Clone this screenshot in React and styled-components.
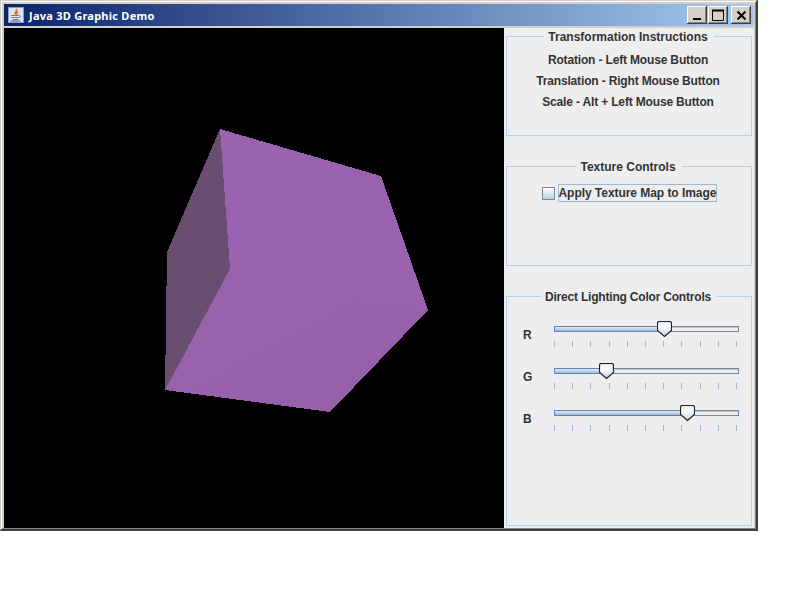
import React from 'react'
import styled, { createGlobalStyle } from 'styled-components'

const GlobalStyle = createGlobalStyle`
  html, body {
    margin: 0;
    padding: 0;
    background: #fff;
  }
`

const Frame = styled.div`
  width: 758px;
  height: 531px;
  box-sizing: border-box;
  background: #d4d0c8;
  border-style: solid;
  border-width: 1px 2px 2px 1px;
  border-color: #d4d0c8 #404040 #404040 #d4d0c8;
  padding: 2px 2px 1px 3px;
  box-shadow: inset 1px 1px 0 #fff, inset -1px -1px 0 #808080;
  display: flex;
  flex-direction: column;
`

const TitleBar = styled.div`
  height: 22px;
  margin: 1px 0 2px;
  padding: 0 3px 0 4px;
  display: flex;
  align-items: center;
  background: linear-gradient(90deg, #0a246a 0%, #a6caf0 100%);
`

const TitleText = styled.span`
  flex: 1;
  margin-left: 5px;
  color: #fff;
  font: bold 11px 'Noto Sans', sans-serif;
  letter-spacing: 0.25px;
`

const WinButton = styled.button`
  width: 20px;
  height: 18px;
  margin-left: ${(p) => p.$gap}px;
  padding: 0;
  background: #d4d0c8;
  border: 0;
  box-shadow: inset -1px -1px 0 #404040, inset 1px 1px 0 #fff, inset -2px -2px 0 #808080;
  display: flex;
  align-items: center;
  justify-content: center;
`

const Body = styled.div`
  flex: 1;
  display: flex;
  min-height: 0;
`

const Canvas = styled.svg`
  width: 500px;
  height: 500px;
  display: block;
  background: #000;
  flex: none;
`

const Side = styled.div`
  flex: 1;
  background: #eeeeee;
  padding: 2px;
  box-sizing: border-box;
  display: flex;
  flex-direction: column;
  gap: 24px;
  font: bold 12px 'Liberation Sans', Arial, sans-serif;
  color: #333333;
`

const Group = styled.fieldset`
  margin: 0;
  padding: 0;
  height: ${(p) => p.$h}px;
  box-sizing: border-box;
  border: 1px solid #b8cfe5;
  min-width: 0;
`

const GroupTitle = styled.legend`
  margin: 0 auto;
  padding: 0 6px 0 4px;
  line-height: 15px;
  height: 13px;
  letter-spacing: ${(p) => (p.$tight ? '-0.2px' : '0')};
`

const Lines = styled.div`
  display: flex;
  flex-direction: column;
  align-items: center;
  gap: 7px;
  padding: 10px 2px 0 0;
  letter-spacing: -0.16px;
`

const Line = styled.div`
  line-height: 14px;
`

const CheckRow = styled.label`
  display: flex;
  justify-content: center;
  gap: 3px;
  align-items: center;
  padding-top: 11px;
`

const CheckBox = styled.span`
  width: 11px;
  height: 11px;
  border: 1px solid #7a8a99;
  background: linear-gradient(#ffffff, #b8cfe5);
`

const CheckLabel = styled.span`
  border: 1px solid #a3b8cc;
  line-height: 16px;
  width: 157px;
  white-space: nowrap;
  letter-spacing: -0.05px;
`

const Sliders = styled.div`
  display: flex;
  flex-direction: column;
  gap: 12px;
  padding: 17px 0 0 16px;
`

const SliderRow = styled.div`
  height: 30px;
  display: flex;
`

const SliderLabel = styled.span`
  width: 31px;
  line-height: 14px;
  padding-top: 8px;
`

const TrackArea = styled.div`
  position: relative;
  width: 185px;
  height: 30px;
`

const Track = styled.div`
  position: absolute;
  top: 6px;
  left: 0;
  right: 0;
  height: 6px;
  box-sizing: border-box;
  border: 1px solid #7a8a99;
  background: linear-gradient(#b8c4d0 0 1px, #eeeeee 1px);
`

const TrackFill = styled.div`
  position: absolute;
  top: 6px;
  left: 0;
  height: 6px;
  box-sizing: border-box;
  border: 1px solid #6382bf;
  border-right: 0;
  background: linear-gradient(#e3ecf5, #a3b8cc);
`

const Thumb = styled.svg`
  position: absolute;
  top: 1px;
  width: 15px;
  height: 16px;
  display: block;
`

const Ticks = styled.div`
  position: absolute;
  top: 21px;
  left: 0;
  width: 183px;
  height: 6px;
  display: flex;
  justify-content: space-between;
`

const Tick = styled.i`
  width: 1px;
  height: 6px;
  background: #a3b8cc;
`

function JavaIcon() {
  return (
    <svg width='16' height='16' viewBox='0 0 16 16' style={{ flex: 'none' }}>
      <rect x='0.5' y='0.5' width='15' height='15' fill='#dfe3ea' stroke='#8f9bb3' />
      <path d='M8 2c2 2-2 3-1 5 .4-1 2-2 3-3-1 1.600-2 2-1 4' fill='none' stroke='#e8641c' strokeWidth='1.200' />
      <path d='M3 8.500h7M3.500 10.500h6.500M5 12.500h5' stroke='#5b7faa' strokeWidth='1.200' />
      <path d='M10.500 8.500c2.500-.5 2.500 2-.5 2.500' fill='none' stroke='#5b7faa' />
      <path d='M2.500 14h10' stroke='#3d5f8c' />
    </svg>
  )
}

function SliderThumb({ center }) {
  return (
    <Thumb viewBox='0 0 15 16' style={{ left: center - 7.5 }}>
      <defs>
        <linearGradient id={'thumb' + center} x1='0' y1='0' x2='0' y2='1'>
          <stop offset='0' stopColor='#dde8f3' />
          <stop offset='0.35' stopColor='#ffffff' />
          <stop offset='1' stopColor='#b8cfe5' />
        </linearGradient>
      </defs>
      <path
        d='M1.500.5h12l1 1v8l-7 6-7-6v-8z'
        fill={`url(#thumb${center})`}
        stroke='#222222'
        strokeWidth='1.200'
      />
    </Thumb>
  )
}

function Slider({ label, center }) {
  return (
    <SliderRow>
      <SliderLabel>{label}</SliderLabel>
      <TrackArea>
        <Track />
        <TrackFill style={{ width: center }} />
        <Ticks>
          {Array.from({ length: 11 }).map((_, i) => (
            <Tick key={i} />
          ))}
        </Ticks>
        <SliderThumb center={center} />
      </TrackArea>
    </SliderRow>
  )
}

export default function App() {
  return (
    <>
      <GlobalStyle />
      <Frame>
        <TitleBar>
          <JavaIcon />
          <TitleText>Java 3D Graphic Demo</TitleText>
          <WinButton $gap={0}>
            <svg width='12' height='12' viewBox='0 0 12 12'>
              <rect x='2' y='9' width='8' height='2' fill='#000' />
            </svg>
          </WinButton>
          <WinButton $gap={1}>
            <svg width='14' height='13' viewBox='0 0 14 13'>
              <path d='M1.500 1.500h11v10h-11z' fill='none' stroke='#000' />
              <path d='M1 1.500h12' stroke='#000' strokeWidth='2' />
            </svg>
          </WinButton>
          <WinButton $gap={3}>
            <svg width='11' height='11' viewBox='0 0 11 11'>
              <path d='M1.500 1.500l8 8M9.500 1.500l-8 8' stroke='#000' strokeWidth='2' />
            </svg>
          </WinButton>
        </TitleBar>
        <Body>
          <Canvas viewBox='4 28 500 500' shapeRendering='crispEdges'>
            <defs>
              <linearGradient id='lower' x1='0' y1='0' x2='1' y2='1'>
                <stop offset='0' stopColor='#9a62ae' />
                <stop offset='1' stopColor='#9460a8' />
              </linearGradient>
            </defs>
            <polygon points='220,129 381,176 428,310 230,269' fill='#9a62ae' />
            <polygon points='230,269 428,310 330,412 165,390' fill='url(#lower)' />
            <polygon points='220,129 230,269 165,390 167,252' fill='#694e72' />
          </Canvas>
          <Side>
            <Group $h={106}>
              <GroupTitle>Transformation Instructions</GroupTitle>
              <Lines>
                <Line>Rotation - Left Mouse Button</Line>
                <Line>Translation - Right Mouse Button</Line>
                <Line>Scale - Alt + Left Mouse Button</Line>
              </Lines>
            </Group>
            <Group $h={106}>
              <GroupTitle>Texture Controls</GroupTitle>
              <CheckRow>
                <CheckBox />
                <CheckLabel>Apply Texture Map to Image</CheckLabel>
              </CheckRow>
            </Group>
            <Group $h={236}>
              <GroupTitle $tight>Direct Lighting Color Controls</GroupTitle>
              <Sliders>
                <Slider label='R' center={110} />
                <Slider label='G' center={52} />
                <Slider label='B' center={133} />
              </Sliders>
            </Group>
          </Side>
        </Body>
      </Frame>
    </>
  )
}
